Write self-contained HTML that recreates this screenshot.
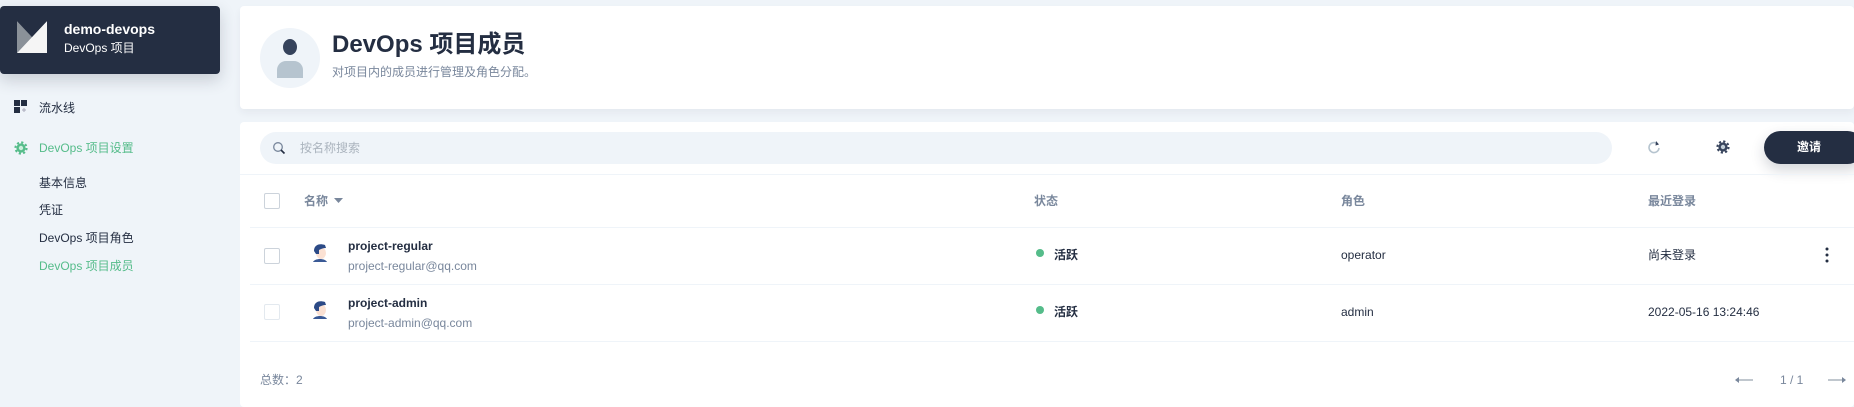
<!DOCTYPE html>
<html><head><meta charset="utf-8"><style>
*{margin:0;padding:0;box-sizing:border-box}
body{width:1854px;height:407px;background:#eff4f9;font-family:"Liberation Sans","Noto Sans CJK SC",sans-serif;font-size:12px;color:#242e42;position:relative;overflow:hidden}
.abs{position:absolute}
.side{left:0;top:6px;width:220px;height:68px;background:#242e42;border-radius:4px;box-shadow:0 6px 16px rgba(36,46,66,.2)}
.nav{left:39px;font-size:12px;color:#242e42;line-height:16px}
.card{background:#fff;border-radius:4px}
.th{top:193px;font-size:12px;color:#79879c;font-weight:bold;line-height:16px}
.sep{left:250px;right:0;height:1px;background:#eff4f9}
.cb{left:264px;width:16px;height:16px;border:1px solid #ccd3db;border-radius:2px;background:#fff}
.nm{left:348px;font-weight:bold;font-size:12px;line-height:16px}
.em{left:348px;color:#79879c;font-size:12px;line-height:16px}
.dot{left:1036px;width:8px;height:8px;border-radius:50%;background:#55bc8a}
.st{left:1054px;font-weight:bold;line-height:16px}
.cell{line-height:16px}
</style></head><body>
<div class="abs side"></div>
<svg class="abs" style="left:17px;top:21px" width="30" height="32" viewBox="0 0 30 32"><polygon points="0,0 15,16 0,32" fill="#8a9199"/><polygon points="30,0 30,32 0,32" fill="#f5f5f5"/><polygon points="0,0 15,16 30,0" fill="#242e42"/></svg>
<div class="abs" style="left:64px;top:20px;color:#fff;font-weight:bold;font-size:14px;line-height:18px">demo-devops</div>
<div class="abs" style="left:64px;top:40px;color:#fff;font-size:12px;line-height:16px">DevOps 项目</div>

<svg class="abs" style="left:14px;top:100px" width="13" height="13" viewBox="0 0 13 13"><rect x="0" y="0" width="6" height="6" fill="#242e42"/><rect x="7" y="0" width="6" height="6" fill="#242e42"/><rect x="0" y="7" width="6" height="6" fill="#242e42"/><path d="M10 8v4M8 10h4" stroke="#aab" stroke-width="1"/></svg>
<div class="abs nav" style="top:100px">流水线</div>
<svg class="abs" style="left:14px;top:141px" width="14" height="14" viewBox="0 0 14 14"><circle cx="7" cy="7" r="5.6" fill="none" stroke="#55bc8a" stroke-width="2" stroke-dasharray="2.2 2.2"/><circle cx="7" cy="7" r="4.6" fill="#55bc8a"/><circle cx="7" cy="7" r="2.2" fill="#c9efdc"/></svg>
<div class="abs nav" style="top:140px;color:#55bc8a">DevOps 项目设置</div>
<div class="abs nav" style="top:175px">基本信息</div>
<div class="abs nav" style="top:202px">凭证</div>
<div class="abs nav" style="top:230px">DevOps 项目角色</div>
<div class="abs nav" style="top:258px;color:#55bc8a">DevOps 项目成员</div>

<div class="abs card" style="left:240px;top:6px;width:1614px;height:103px;box-shadow:0 4px 8px rgba(36,46,66,.05)"></div>
<div class="abs" style="left:260px;top:28px;width:60px;height:60px;border-radius:50%;background:#eff4f9"></div>
<svg class="abs" style="left:270px;top:36px" width="40" height="44" viewBox="0 0 40 44"><ellipse cx="20" cy="11" rx="7" ry="8" fill="#36435c"/><path d="M7 42v-8c0-5 4-9 9-9h8c5 0 9 4 9 9v8z" fill="#b6c4cf"/></svg>
<div class="abs" style="left:332px;top:30px;font-size:24px;font-weight:bold;line-height:30px">DevOps 项目成员</div>
<div class="abs" style="left:332px;top:64px;font-size:12px;color:#79879c;line-height:16px">对项目内的成员进行管理及角色分配。</div>

<div class="abs card" style="left:240px;top:122px;width:1614px;height:285px"></div>
<div class="abs" style="left:260px;top:132px;width:1352px;height:32px;border-radius:16px;background:#eff4f9"></div>
<svg class="abs" style="left:272px;top:141px" width="14" height="14" viewBox="0 0 14 14"><circle cx="6" cy="6" r="4.3" fill="none" stroke="#79879c" stroke-width="1.3"/><path d="M9 9l3.5 3.5" stroke="#242e42" stroke-width="1.6"/></svg>
<div class="abs" style="left:300px;top:140px;color:#abb4be;line-height:16px">按名称搜索</div>
<svg class="abs" style="left:1647px;top:140px" width="14" height="14" viewBox="0 0 14 14"><path d="M11 4.5A5 5 0 1 0 12 8" fill="none" stroke="#b6c4cf" stroke-width="1.6"/><path d="M9 1l3 3.5-3.5 1z" fill="#36435c"/></svg>
<svg class="abs" style="left:1716px;top:140px" width="14" height="14" viewBox="0 0 14 14"><circle cx="7" cy="7" r="5.6" fill="none" stroke="#36435c" stroke-width="2" stroke-dasharray="2.2 2.2"/><circle cx="7" cy="7" r="4.6" fill="#36435c"/><circle cx="7" cy="7" r="2.2" fill="#c1cdd7"/></svg>
<div class="abs" style="left:1764px;top:131px;width:100px;height:33px;border-radius:17px;background:#242e42;box-shadow:0 6px 14px rgba(36,46,66,.2);color:#fff;font-weight:bold;font-size:12px;line-height:33px;padding-left:33px">邀请</div>

<div class="abs sep" style="left:240px;top:174px"></div>
<div class="abs cb" style="top:193px"></div>
<div class="abs th" style="left:304px">名称</div>
<svg class="abs" style="left:334px;top:198px" width="10" height="6"><path d="M0 0h9L4.5 5z" fill="#79879c"/></svg>
<div class="abs th" style="left:1034px">状态</div>
<div class="abs th" style="left:1341px">角色</div>
<div class="abs th" style="left:1648px">最近登录</div>
<div class="abs sep" style="top:227px"></div>

<div class="abs cb" style="top:248px"></div>
<svg class="abs" style="left:311px;top:242px" width="18" height="22" viewBox="0 0 18 22"><ellipse cx="10" cy="11" rx="5" ry="6" fill="#fbe1d3"/><path d="M3 9c0-6 5-8 11-6l1 3c-3 0-5 1-7 2v4H5z" fill="#2c4a86"/><path d="M2 20c2-4 12-4 14 0z" fill="#3a5a96"/></svg>
<div class="abs nm" style="top:238px">project-regular</div>
<div class="abs em" style="top:258px">project-regular@qq.com</div>
<div class="abs dot" style="top:249px"></div>
<div class="abs st" style="top:247px">活跃</div>
<div class="abs cell" style="left:1341px;top:247px">operator</div>
<div class="abs cell" style="left:1648px;top:247px">尚未登录</div>
<svg class="abs" style="left:1824px;top:247px" width="6" height="16"><circle cx="3" cy="2" r="1.5" fill="#242e42"/><circle cx="3" cy="8" r="1.5" fill="#242e42"/><circle cx="3" cy="14" r="1.5" fill="#242e42"/></svg>
<div class="abs sep" style="top:284px"></div>

<div class="abs cb" style="top:304px;border-color:#e3e9ef"></div>
<svg class="abs" style="left:311px;top:299px" width="18" height="22" viewBox="0 0 18 22"><ellipse cx="10" cy="11" rx="5" ry="6" fill="#fbe1d3"/><path d="M3 9c0-6 5-8 11-6l1 3c-3 0-5 1-7 2v4H5z" fill="#2c4a86"/><path d="M2 20c2-4 12-4 14 0z" fill="#3a5a96"/></svg>
<div class="abs nm" style="top:295px">project-admin</div>
<div class="abs em" style="top:315px">project-admin@qq.com</div>
<div class="abs dot" style="top:306px"></div>
<div class="abs st" style="top:304px">活跃</div>
<div class="abs cell" style="left:1341px;top:304px">admin</div>
<div class="abs cell" style="left:1648px;top:304px">2022-05-16 13:24:46</div>
<div class="abs sep" style="top:341px"></div>

<div class="abs" style="left:260px;top:372px;color:#79879c;line-height:16px">总数：2</div>
<svg class="abs" style="left:1735px;top:375px" width="18" height="10"><path d="M2 5h16" stroke="#abb4be" stroke-width="1.5"/><path d="M0 5l4-3v6z" fill="#79879c"/></svg>
<div class="abs" style="left:1780px;top:372px;color:#79879c;line-height:16px">1 / 1</div>
<svg class="abs" style="left:1828px;top:375px" width="18" height="10"><path d="M0 5h15" stroke="#abb4be" stroke-width="1.5"/><path d="M18 5l-4-3v6z" fill="#79879c"/></svg>
</body></html>
